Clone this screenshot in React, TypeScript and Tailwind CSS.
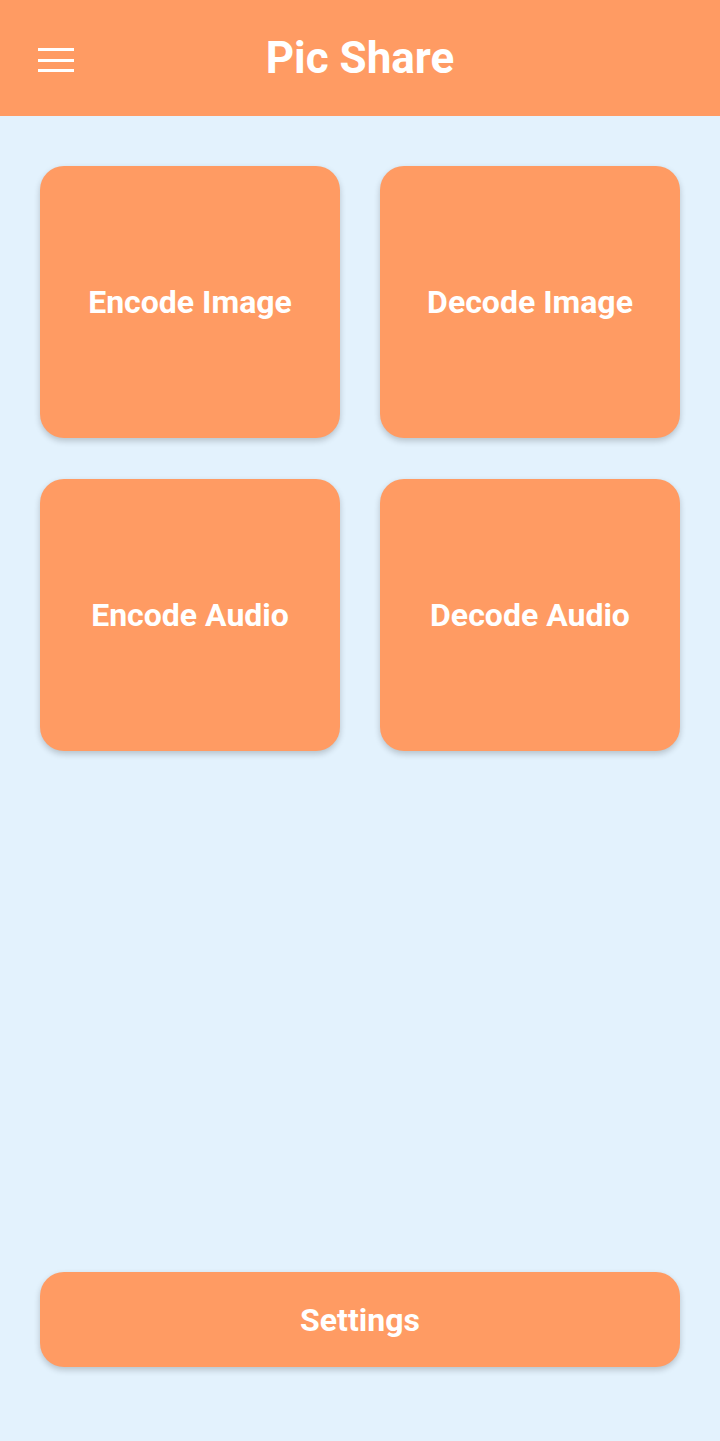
import React from 'react';

const tiles = ['Encode Image', 'Decode Image', 'Encode Audio', 'Decode Audio'];

const App: React.FC = () => {
  return (
    <div className="w-[720px] h-[1441px] bg-[#e3f2fd] flex flex-col" style={{ fontFamily: 'Roboto, sans-serif' }}>
      <header className="h-[116px] bg-[#ff9b63] flex items-center relative shrink-0">
        <button className="absolute left-[38px] top-[48px] w-[36px] h-[24px] flex flex-col justify-between">
          <span className="block h-[3px] w-full bg-white"></span>
          <span className="block h-[3px] w-full bg-white"></span>
          <span className="block h-[3px] w-full bg-white"></span>
        </button>
        <h1 className="w-full text-center text-white font-bold text-[44px] leading-none">Pic Share</h1>
      </header>

      <main className="flex-1 flex flex-col px-[40px] pt-[50px] pb-[74px]">
        <div className="grid grid-cols-2 gap-x-[40px] gap-y-[41px]">
          {tiles.map((t) => (
            <button
              key={t}
              className="h-[272px] rounded-[24px] bg-[#ff9b63] shadow-[0_3px_6px_rgba(0,0,0,0.2)] flex items-center justify-center text-white font-bold text-[32px]"
            >
              {t}
            </button>
          ))}
        </div>
        <div className="flex-1"></div>
        <button className="h-[95px] rounded-[24px] bg-[#ff9b63] shadow-[0_3px_6px_rgba(0,0,0,0.2)] text-white font-bold text-[32px]">
          Settings
        </button>
      </main>
    </div>
  );
};

export default App;
